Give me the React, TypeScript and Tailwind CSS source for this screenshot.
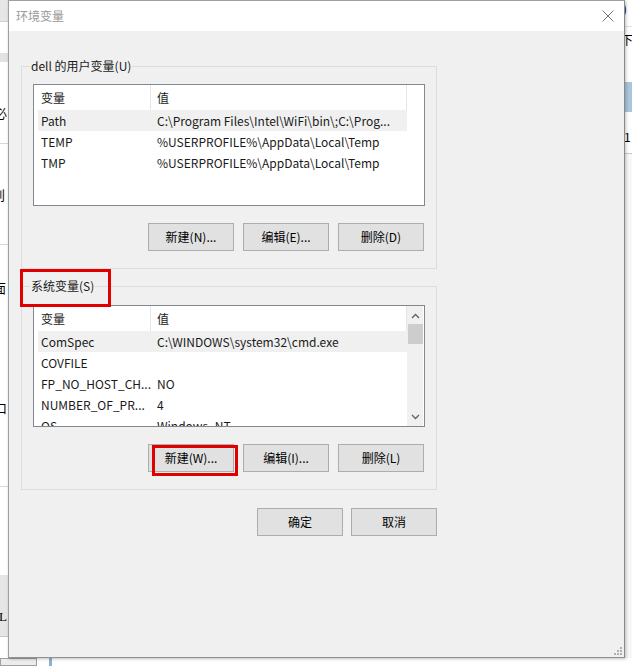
import React from "react";

type Row = [string, string];

function Btn({ label }: { label: string }) {
  return (
    <div className="w-[86px] h-[28px] bg-[#e1e1e1] border border-[#adadad] flex items-center justify-center text-[12px] text-black">
      {label}
    </div>
  );
}

function Chevron({ up }: { up?: boolean }) {
  return (
    <svg width="9" height="6" viewBox="0 0 9 6">
      <path
        d={up ? "M1 5 L4.5 1.5 L8 5" : "M1 1 L4.5 4.5 L8 1"}
        fill="none"
        stroke="#606060"
        strokeWidth="1.3"
      />
    </svg>
  );
}

function ListView({ rows, scroll }: { rows: Row[]; scroll?: boolean }) {
  return (
    <div className="w-[392px] h-[122px] border border-[#828790] bg-white flex overflow-hidden">
      <div className="w-[373px] flex flex-col pl-[4px] shrink-0">
        <div className="h-[25px] flex shrink-0">
          <div className="w-[113px] pl-[3px] border-r border-[#e5e5e5] flex items-center">变量</div>
          <div className="w-[256px] pl-[6px] border-r border-[#e5e5e5] flex items-center">值</div>
        </div>
        {rows.map((r, i) => (
          <div
            key={i}
            className={
              "h-[21px] w-[369px] flex shrink-0 items-center whitespace-nowrap " +
              (i === 0 ? "bg-[#f0f0f0]" : "")
            }
          >
            <div className="w-[113px] pl-[3px] overflow-hidden">{r[0]}</div>
            <div className="w-[256px] pl-[6px] overflow-hidden">{r[1]}</div>
          </div>
        ))}
      </div>
      {scroll ? (
        <div className="w-[16px] mr-[1px] ml-auto bg-[#f0f0f0] flex flex-col items-center">
          <div className="h-[17px] flex items-center justify-center pt-[3px]">
            <Chevron up />
          </div>
          <div className="w-[15px] h-[20px] mt-[1px] bg-[#cdcdcd]" />
          <div className="flex-1" />
          <div className="h-[17px] flex items-center justify-center pb-[1px]">
            <Chevron />
          </div>
        </div>
      ) : null}
    </div>
  );
}

function Group({
  legend,
  rows,
  scroll,
  buttons,
  pt,
}: {
  legend: string;
  rows: Row[];
  scroll?: boolean;
  buttons: string[];
  pt: string;
}) {
  return (
    <div className={"relative w-[416px] border border-[#dcdcdc] pl-[11px] pb-[17px] " + pt}>
      <span className="absolute left-[8px] top-[-9px] bg-[#f0f0f0] px-[1px] leading-[16px] text-[12px]">
        {legend}
      </span>
      <ListView rows={rows} scroll={scroll} />
      <div className="w-[392px] flex justify-end gap-[9px] pr-[1px] mt-[17px]">
        {buttons.map((b) => (
          <Btn key={b} label={b} />
        ))}
      </div>
    </div>
  );
}

export default function App() {
  const userRows: Row[] = [
    ["Path", "C:\\Program Files\\Intel\\WiFi\\bin\\;C:\\Prog..."],
    ["TEMP", "%USERPROFILE%\\AppData\\Local\\Temp"],
    ["TMP", "%USERPROFILE%\\AppData\\Local\\Temp"],
  ];
  const sysRows: Row[] = [
    ["ComSpec", "C:\\WINDOWS\\system32\\cmd.exe"],
    ["COVFILE", ""],
    ["FP_NO_HOST_CH...", "NO"],
    ["NUMBER_OF_PR...", "4"],
    ["OS", "Windows_NT"],
  ];

  return (
    <div className="relative w-[632px] h-[666px] overflow-hidden bg-white text-[12px] text-[#1a1a1a] [font-family:'Noto_Sans_CJK_SC','Noto_Sans',sans-serif]">
      {/* background window fragments: left */}
      <div className="absolute left-0 top-0 w-[8px] h-[666px] overflow-hidden bg-white">
        <div className="h-[22px] bg-[#e6e6e6] border-b border-[#d0d0d0]" />
        <div className="h-[31px]" />
        <div className="h-[9px] bg-[#e2e2e2]" />
        <div className="h-[82px] relative border-b border-[#d8d8d8]">
          <span className="absolute left-[-6px] top-[43px] text-[13px] leading-[16px] text-black">必</span>
        </div>
        <div className="h-[101px] relative border-b border-[#d8d8d8]">
          <span className="absolute left-[-8px] top-[43px] text-[13px] leading-[16px] text-black">到</span>
        </div>
        <div className="h-[83px] relative">
          <span className="absolute left-[-7px] top-[35px] text-[13px] leading-[16px] text-black">面</span>
        </div>
        <div className="h-[159px] relative border-b border-[#d8d8d8]">
          <span className="absolute left-[-6px] top-[72px] text-[13px] leading-[16px] text-black">口</span>
        </div>
        <div className="h-[88px]" />
        <div className="h-[62px] bg-[#e6e6e6] relative border-b border-[#c8c8c8]">
          <span className="absolute left-[-1px] top-[34px] text-[13px] leading-[16px] text-black [font-family:'Liberation_Serif',serif]">L</span>
        </div>
        <div className="h-[18px]" />
      </div>
      {/* right */}
      <div className="absolute left-[624px] top-0 w-[8px] h-[666px] overflow-hidden bg-white">
        <div className="h-[26px] relative">
          <span className="absolute left-[-1px] top-[0px] text-[12px] text-black">)</span>
        </div>
        <div className="h-[56px] relative border-t border-[#e0e0e0]">
          <span className="absolute left-[-3px] top-[4px] text-[12px] text-black">下</span>
        </div>
        <div className="h-[30px] bg-[#a9c6dc]" />
        <div className="h-[42px] relative border-b border-[#c8c8c8]">
          <span className="absolute left-[0px] top-[16px] text-[12px] text-black">1</span>
        </div>
        <div className="bg-[#f7f7f7] h-[520px]" />
      </div>
      {/* bottom */}
      <div className="absolute left-0 top-[658px] w-[632px] h-[8px] bg-white flex">
        <div className="w-[37px] h-[8px] border border-[#a0a0a0] bg-[#ececec]" />
        <div className="w-[12px]" />
        <div className="w-[3px] h-[8px] bg-[#8fb0cf]" />
      </div>

      {/* dialog */}
      <div className="absolute left-[8px] top-0 w-[617px] h-[658px] bg-[#f0f0f0] border border-[#a0a0a0] border-r-[#8a8a8a] border-b-[#909090] shadow-[1px_1px_3px_rgba(0,0,0,0.25)] flex flex-col">
        <div className="h-[30px] bg-white flex items-center justify-between pl-[7px] pr-[10px] shrink-0">
          <span className="text-[12px] text-[#999999]">环境变量</span>
          <svg width="12" height="12" viewBox="0 0 12 12">
            <path d="M0.5 0.5 L11.5 11.5 M11.5 0.5 L0.5 11.5" stroke="#777777" strokeWidth="1" fill="none" />
          </svg>
        </div>
        <div className="pl-[12px] pt-[35px] flex flex-col">
          <Group
            legend="dell 的用户变量(U)"
            rows={userRows}
            buttons={["新建(N)...", "编辑(E)...", "删除(D)"]}
            pt="pt-[17px]"
          />
          <div className="mt-[17px]">
            <Group
              legend="系统变量(S)"
              rows={sysRows}
              scroll
              buttons={["新建(W)...", "编辑(I)...", "删除(L)"]}
              pt="pt-[18px]"
            />
          </div>
          <div className="w-[416px] flex justify-end gap-[8px] mt-[18px]">
            <Btn label="确定" />
            <Btn label="取消" />
          </div>
        </div>
        {/* size grip */}
        <div className="mt-auto self-end mr-[2px] mb-[2px] grid grid-cols-3 gap-[1px] w-[8px] h-[8px]">
          <span />
          <span />
          <span className="bg-[#b0b0b0]" />
          <span />
          <span className="bg-[#b0b0b0]" />
          <span className="bg-[#b0b0b0]" />
          <span className="bg-[#b0b0b0]" />
          <span className="bg-[#b0b0b0]" />
          <span className="bg-[#b0b0b0]" />
        </div>
      </div>

      {/* red annotation boxes */}
      <div className="absolute left-[20px] top-[269px] w-[91px] h-[38px] border-[3px] border-[#e00000]" />
      <div className="absolute left-[152px] top-[445px] w-[86px] h-[31px] border-[3px] border-[#e00000]" />
    </div>
  );
}
